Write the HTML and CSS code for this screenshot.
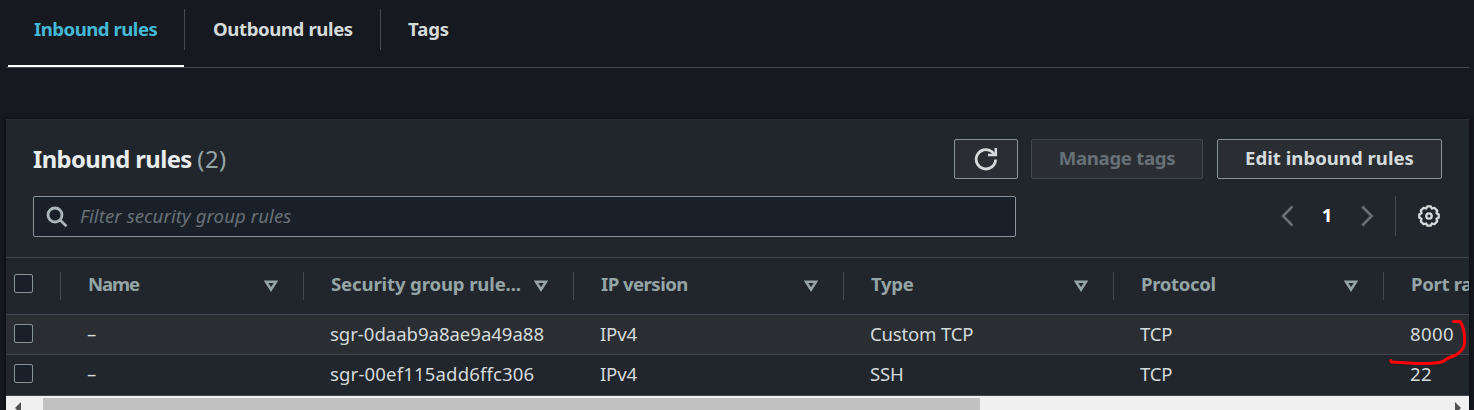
FILE: index.html
```html
<!DOCTYPE html>
<html lang="en">
<head>
<meta charset="utf-8">
<title>Inbound rules</title>
<link rel="stylesheet" href="styles.css">
</head>
<body>
<nav class="tabs">
  <a class="tab tab-active"><span class="tab-label">Inbound rules</span></a>
  <a class="tab"><span class="tab-label">Outbound rules</span></a>
  <a class="tab"><span class="tab-label">Tags</span></a>
</nav>
<main class="panel">
  <header class="panel-head">
    <h2 class="title">Inbound rules <span class="count">(2)</span></h2>
    <div class="actions">
      <button class="btn btn-icon"><svg width="24" height="24" viewBox="0 0 24 24" fill="none" stroke="currentColor" stroke-width="2.8"><path d="M21.600 12.400A9.700 9.700 0 1 1 17.700 4.500L20.200 7"/><path d="M21.800 1V8.100H14" stroke-width="2.500"/></svg></button>
      <button class="btn btn-manage" disabled>Manage tags</button>
      <button class="btn btn-edit">Edit inbound rules</button>
    </div>
  </header>
  <div class="toolbar">
    <label class="search">
      <svg class="search-icon" width="22" height="22" viewBox="0 0 22 22" fill="none" stroke="currentColor" stroke-width="2.8"><circle cx="9" cy="9" r="7"/><path d="M14 14L20.500 20.200"/></svg>
      <span class="placeholder">Filter security group rules</span>
    </label>
    <div class="pager">
      <svg class="arrow" width="14" height="22" viewBox="0 0 14 22"><path d="M12.500 1.500L3 11L12.500 20.500"/></svg>
      <span class="page">1</span>
      <svg class="arrow" width="14" height="22" viewBox="0 0 14 22"><path d="M2.200 1.500L11.700 11L2.200 20.500"/></svg>
      <span class="pager-line"></span>
      <svg class="gear" width="24" height="24" viewBox="-12 -12 24 24"><path d="M-1.700-9.700H1.700L2.800-7.500L5.400-8.200L8.200-5.400L7.500-2.800L9.700-1.700V1.700L7.500 2.800L8.200 5.400L5.400 8.200L2.800 7.500L1.700 9.700H-1.700L-2.800 7.500L-5.400 8.200L-8.200 5.400L-7.500 2.800L-9.700 1.700V-1.700L-7.500-2.800L-8.200-5.400L-5.400-8.200L-2.800-7.500Z"/><circle r="2.700"/></svg>
    </div>
  </div>
  <div class="grid grid-head">
    <div class="check-cell"><span class="checkbox"></span></div>
    <div class="th th-name"><span>Name</span><svg class="sort" width="14" height="12" viewBox="0 0 14 12"><path d="M2 1.700H12L7 9.500Z"/></svg></div>
    <div class="th th-long"><span>Security group rule...</span><svg class="sort" width="14" height="12" viewBox="0 0 14 12"><path d="M2 1.700H12L7 9.500Z"/></svg></div>
    <div class="th th-ip"><span>IP version</span><svg class="sort" width="14" height="12" viewBox="0 0 14 12"><path d="M2 1.700H12L7 9.500Z"/></svg></div>
    <div class="th"><span>Type</span><svg class="sort" width="14" height="12" viewBox="0 0 14 12"><path d="M2 1.700H12L7 9.500Z"/></svg></div>
    <div class="th"><span>Protocol</span><svg class="sort" width="14" height="12" viewBox="0 0 14 12"><path d="M2 1.700H12L7 9.500Z"/></svg></div>
    <div class="th th-port"><span>Port range</span></div>
  </div>
  <div class="grid row row-hover">
    <div class="check-cell"><span class="checkbox"></span></div>
    <div class="td">–</div><div class="td td-id">sgr-0daab9a8ae9a49a88</div><div class="td">IPv4</div><div class="td">Custom TCP</div><div class="td">TCP</div><div class="td td-port">8000</div>
  </div>
  <div class="grid row row-last">
    <div class="check-cell"><span class="checkbox"></span></div>
    <div class="td">–</div><div class="td td-id td-id-wide">sgr-00ef115add6ffc306</div><div class="td">IPv4</div><div class="td">SSH</div><div class="td">TCP</div><div class="td td-port">22</div>
  </div>
  <div class="scrollbar">
    <svg class="scroll-arrow" width="6" height="12" viewBox="0 0 6 12"><path d="M6 0V12L0 6Z"/></svg>
    <span class="thumb"></span>
    <svg class="scroll-arrow" width="6" height="12" viewBox="0 0 6 12"><path d="M0 0V12L6 6Z"/></svg>
  </div>
</main>
<svg class="marker" width="84" height="52" viewBox="0 0 84 52"><path d="M64.500 6.500H71Q76 13 75.500 28Q75 35 67 40Q58 43 54 46.500Q46 49 28 48.500L2.500 47L1.800 45.500"/></svg>
</body>
</html>
```

FILE: styles.css
```css
* { box-sizing: border-box; }
body {
  margin: 0;
  width: 1474px;
  height: 410px;
  padding: 0 5px 0 6px;
  overflow: hidden;
  position: relative;
  background: #16191f;
  color: #d5dbdb;
  font-family: "Noto Sans", "Open Sans", sans-serif;
  font-size: 18.6px;
}
.tabs {
  display: flex;
  height: 68px;
  padding: 9px 0 0 2px;
  border-bottom: 1px solid #444a52;
}
.tab {
  height: 58px;
  position: relative;
  font-weight: 700;
  letter-spacing: -0.5px;
}
.tab-label {
  display: block;
  height: 41px;
  line-height: 39px;
  padding: 0 26px 0 28px;
  border-right: 1px solid #444a52;
  white-space: nowrap;
}
.tab:nth-child(1) { width: 177px; }
.tab:nth-child(1) .tab-label { padding-left: 26px; }
.tab:nth-child(2) { width: 196px; letter-spacing: -0.4px; }
.tab:nth-child(3) .tab-label { padding-left: 27px; border-right: 0; letter-spacing: -0.1px; }
.tab-active { color: #44b9d6; }
.tab-active::after {
  content: "";
  position: absolute;
  left: 0;
  bottom: 0;
  width: 176px;
  height: 2px;
  background: #fff;
}
.panel {
  margin-top: 51px;
  height: 291px;
  overflow: hidden;
  background: #21252c;
  border-top: 1px solid #2a2e33;
  box-shadow: 0 1px 4px 1px #0b0d11;
}
.panel-head {
  display: flex;
  justify-content: space-between;
  padding: 19px 27px 0 27px;
  height: 76px;
}
.title {
  margin: 0;
  line-height: 41px;
  font-size: 23.8px;
  font-weight: 700;
  letter-spacing: -0.57px;
  color: #eaeded;
}
.count { font-weight: 400; letter-spacing: 0.4px; color: #95a5a6; }
.actions { display: flex; }
.btn {
  height: 40px;
  padding: 0 0 3px;
  border: 1px solid #879596;
  border-radius: 2px;
  background: #2a2e33;
  color: #d5dbdb;
  font: 700 18.6px "Noto Sans", "Open Sans", sans-serif;
  white-space: nowrap;
}
.btn-icon { width: 64px; padding: 0; display: flex; align-items: center; justify-content: center; }
.btn-manage { width: 172px; margin-left: 13px; border-color: #414750; color: #687078; letter-spacing: -0.3px; }
.btn-edit { width: 225px; margin-left: 14px; }
.toolbar {
  display: flex;
  justify-content: space-between;
  height: 61px;
  padding: 0 27px;
}
.search {
  width: 983px;
  height: 41px;
  display: flex;
  align-items: center;
  padding-left: 12px;
  border: 1px solid #879596;
  border-radius: 2px;
  background: #1a2029;
}
.search-icon { color: #aab7b8; }
.placeholder {
  margin-left: 12px;
  padding-bottom: 2px;
  font-style: italic;
  letter-spacing: 0.07px;
  color: #687078;
}
.pager { display: flex; align-items: center; height: 40px; }
.arrow { fill: none; stroke: #687078; stroke-width: 2.500; }
.page { width: 66px; padding-bottom: 3px; text-align: center; font-weight: 700; color: #fff; }
.pager-line { width: 1px; height: 40px; margin: 0 21px; background: #414750; }
.gear { margin-right: 1px; fill: none; stroke: #d5dbdb; stroke-width: 2.300; stroke-linejoin: round; }
.grid {
  display: grid;
  grid-template-columns: 54px 243px 270px 270px 270px 270px 86px;
  border-top: 1px solid #414750;
}
.grid-head { height: 57px; align-items: center; }
.check-cell { padding-left: 8px; }
.checkbox {
  display: block;
  width: 19px;
  height: 19px;
  border: 1px solid #879596;
  border-radius: 2px;
  background: #1a2029;
}
.grid-head .checkbox { margin-top: -5px; }
.th {
  display: flex;
  align-items: center;
  justify-content: space-between;
  height: 28px;
  padding: 0 25px 0 27px;
  border-left: 1px solid #414750;
  color: #95a5a6;
  font-weight: 700;
  letter-spacing: -0.35px;
  white-space: nowrap;
  overflow: hidden;
}
.th span { line-height: 25px; padding-bottom: 5px; }
.th-name { letter-spacing: -1.1px; }
.th-long { letter-spacing: -0.15px; }
.th-ip { letter-spacing: -0.55px; }
.sort { flex: none; fill: none; stroke: #95a5a6; stroke-width: 2.600; }
.row { height: 40px; line-height: 38px; }
.row-last { height: 42px; border-bottom: 1px solid #414750; }
.row-hover { background: #2a2e33; }
.row .checkbox { margin-top: 9px; }
.td { padding-left: 27px; white-space: nowrap; overflow: hidden; letter-spacing: -0.2px; }
.td-id { letter-spacing: -0.05px; }
.td-id-wide { letter-spacing: 0.13px; }
.td-port { letter-spacing: 0.4px; }
.scrollbar {
  display: flex;
  height: 18px;
  padding: 2px 8px 0 9px;
  background: #f0f0f0;
}
.scroll-arrow { margin-top: 4px; fill: #505050; }
.thumb { width: 937px; height: 16px; margin: 0 auto 0 22px; background: #c1c1c1; }
.marker {
  position: absolute;
  left: 1389px;
  top: 315px;
  fill: none;
  stroke: #ff0008;
  stroke-width: 3;
  stroke-linecap: round;
  stroke-linejoin: round;
}
```
